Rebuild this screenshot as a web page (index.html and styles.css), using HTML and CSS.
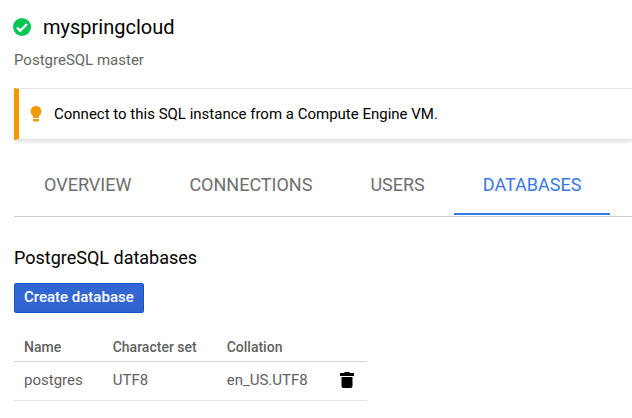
FILE: index.html
```html
<!DOCTYPE html>
<html lang="en">
<head>
    <meta charset="UTF-8">
    <meta name="viewport" content="width=device-width, initial-scale=1.0">
    <title>myspringcloud</title>
    <link rel="stylesheet" href="styles.css">
</head>
<body>
    <header>
        <div class="title">
            <svg class="status-icon" viewBox="0 0 18 18" role="img" aria-label="Running">
                <circle cx="9" cy="9" r="9" fill="#00c752"/>
                <path d="M4 9.5l3.2 3.2L14 6" fill="none" stroke="#fff" stroke-width="2.4"/>
            </svg>
            <h1>myspringcloud</h1>
        </div>
        <p class="subtitle">PostgreSQL master</p>
    </header>

    <div class="notice">
        <svg class="bulb-icon" viewBox="0 0 12 16" aria-hidden="true">
            <path d="M6 0a5.3 5.3 0 0 0-3 9.700V11q0 1 1 1h4q1 0 1-1V9.700A5.300 5.300 0 0 0 6 0z" fill="#f29900"/>
            <path d="M3 13h6v1.500q0 1-1 1H4q-1 0-1-1z" fill="#f29900"/>
        </svg>
        <span>Connect to this SQL instance from a Compute Engine VM.</span>
    </div>

    <nav class="tabs">
        <a href="#overview">OVERVIEW</a>
        <a href="#connections">CONNECTIONS</a>
        <a href="#users">USERS</a>
        <a href="#databases" class="active" aria-current="page">DATABASES</a>
    </nav>

    <main>
        <h2>PostgreSQL databases</h2>
        <button type="button" class="create">Create database</button>
        <table>
            <thead>
                <tr>
                    <th>Name</th>
                    <th>Character set</th>
                    <th>Collation</th>
                    <th></th>
                </tr>
            </thead>
            <tbody>
                <tr>
                    <td>postgres</td>
                    <td>UTF8</td>
                    <td>en_US.UTF8</td>
                    <td>
                        <button type="button" class="delete" aria-label="Delete postgres">
                            <svg viewBox="0 0 14 16" aria-hidden="true">
                                <path d="M0 1h4l1-1h4l1 1h4v3H0z"/>
                                <path d="M1.500 5h11v9q0 2-2 2h-7q-2 0-2-2z"/>
                            </svg>
                        </button>
                    </td>
                </tr>
            </tbody>
        </table>
    </main>
</body>
</html>
```

FILE: styles.css
```css
body {
    margin: 0;
    padding: 14px 0 16px 14px;
    font-family: Roboto, Arial, sans-serif;
    font-size: 15px;
    color: #000;
    background: #fff;
}
h1, h2, p {
    margin: 0;
    font-weight: 400;
}
.title {
    display: flex;
    align-items: center;
    gap: 12px;
    margin-left: -1px;
}
h1 {
    font-size: 20px;
    line-height: 26px;
}
.status-icon {
    width: 18px;
    height: 18px;
}
.subtitle {
    margin-top: 10px;
    line-height: 20px;
    color: #666;
}
.notice {
    display: flex;
    align-items: center;
    gap: 12px;
    margin-top: 18px;
    padding: 15px 11px;
    border: 1px solid #e4e4e4;
    border-right: none;
    border-left: 5px solid #f29900;
    line-height: 20px;
    box-shadow: 0 2px 4px rgba(0,0,0,0.12);
}
.bulb-icon {
    width: 12px;
    height: 16px;
}
.tabs {
    display: flex;
    margin-top: 20px;
    padding: 0 0 1px 1px;
    border-bottom: 1px solid #d0d0d0;
}
.tabs a {
    padding: 13px 29px 16px;
    border-bottom: 2px solid transparent;
    font-size: 18px;
    line-height: 24px;
    color: #6e6e6e;
    text-decoration: none;
}
.tabs .active {
    color: #3b78e7;
    border-bottom-color: #3b78e7;
}
main {
    padding-top: 29px;
}
h2 {
    font-size: 18px;
    line-height: 24px;
}
.create {
    display: block;
    height: 30px;
    margin-top: 13px;
    padding: 0 9px 2px;
    border: 1px solid #1455cc;
    border-radius: 2px;
    background: linear-gradient(#3367d6, #3063cc);
    font: 500 15px Roboto, Arial, sans-serif;
    color: #fff;
    cursor: pointer;
}
table {
    margin-top: 20px;
    border-collapse: collapse;
    color: #616161;
}
th, td {
    padding: 0 20px 0 10px;
    border-bottom: 1px solid #e4e4e4;
    text-align: left;
    line-height: 20px;
}
th {
    height: 28px;
    border-bottom-color: #d0d0d0;
    font-size: 14px;
    font-weight: 500;
}
td {
    height: 36px;
    padding-bottom: 2px;
}
th:last-child, td:last-child {
    padding-left: 12px;
    padding-right: 13px;
}
.delete {
    display: block;
    padding: 0;
    border: none;
    background: none;
    cursor: pointer;
}
.delete svg {
    display: block;
    width: 14px;
    height: 16px;
}
```
